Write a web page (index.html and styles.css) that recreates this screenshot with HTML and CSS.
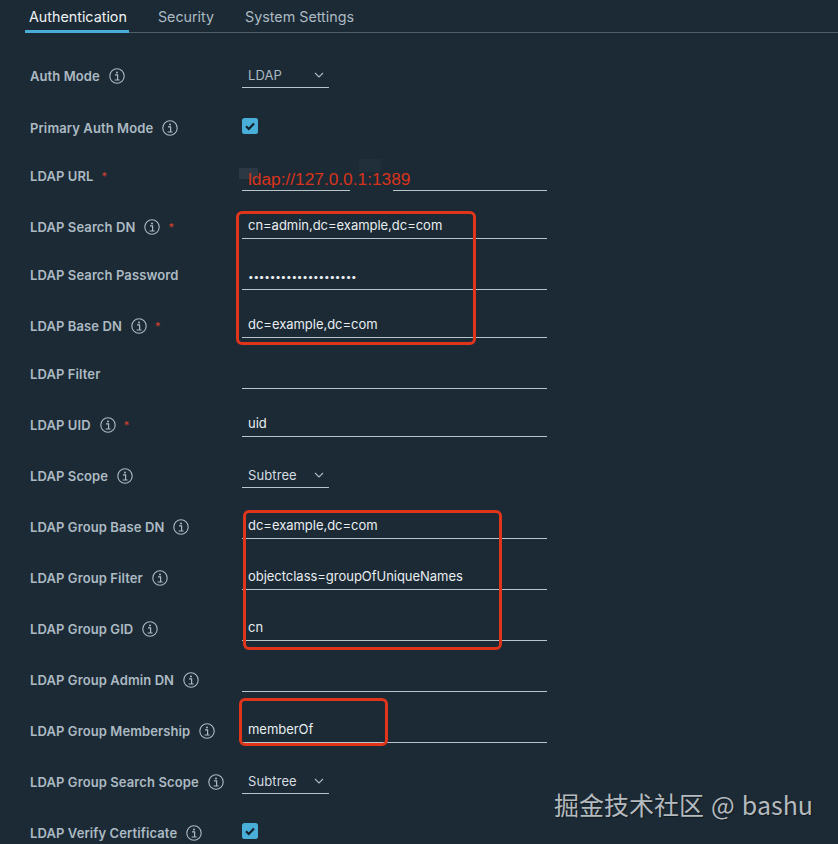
FILE: index.html
```html
<!DOCTYPE html>
<html lang="en">
<head>
    <meta charset="UTF-8">
    <title>Authentication</title>
    <link rel="stylesheet" href="styles.css">
</head>
<body>
    <svg class="defs" width="0" height="0">
        <symbol id="info" viewBox="0 0 16 16">
            <circle cx="8" cy="8" r="7.2" fill="none" stroke="currentColor" stroke-width="1.1"/>
            <circle cx="8" cy="4.4" r="1" fill="currentColor"/>
            <path d="M6 6.9h2.6v5M5.6 12h5" fill="none" stroke="currentColor" stroke-width="1.2"/>
        </symbol>
        <symbol id="caret" viewBox="0 0 10 6">
            <path d="M1 1l4 4 4-4" fill="none" stroke="currentColor" stroke-width="1.1"/>
        </symbol>
        <symbol id="check" viewBox="0 0 16 16">
            <rect width="16" height="16" rx="2.5" fill="#49afd9"/>
            <path d="M4 8.2l2.8 2.8L12 5.4" fill="none" stroke="#14222c" stroke-width="2.2"/>
        </symbol>
    </svg>

    <nav class="tabs">
        <a class="tab active">Authentication</a>
        <a class="tab">Security</a>
        <a class="tab">System Settings</a>
    </nav>

    <form class="form">
        <div class="row">
            <label>Auth Mode <svg class="info"><use href="#info"/></svg></label>
            <div class="select short"><span>LDAP</span><svg class="caret"><use href="#caret"/></svg></div>
        </div>
        <div class="row high">
            <label>Primary Auth Mode <svg class="info"><use href="#info"/></svg></label>
            <svg class="checkbox"><use href="#check"/></svg>
        </div>
        <div class="row">
            <label class="plain">LDAP URL <em>*</em></label>
            <div class="input url">
                <span class="smudge"></span>
                <span class="smudge faint"></span>
                <span class="line-gap"></span>
                <span class="url-text">ldap://127.0.0.1:1389</span>
            </div>
        </div>
        <div class="row low">
            <label>LDAP Search DN <svg class="info"><use href="#info"/></svg> <em>*</em></label>
            <div class="input">cn=admin,dc=example,dc=com</div>
        </div>
        <div class="row">
            <label class="plain">LDAP Search Password</label>
            <div class="input dots">••••••••••••••••••••</div>
        </div>
        <div class="row low">
            <label>LDAP Base DN <svg class="info"><use href="#info"/></svg> <em>*</em></label>
            <div class="input">dc=example,dc=com</div>
        </div>
        <div class="row">
            <label class="plain">LDAP Filter</label>
            <div class="input"></div>
        </div>
        <div class="row low">
            <label>LDAP UID <svg class="info"><use href="#info"/></svg> <em>*</em></label>
            <div class="input">uid</div>
        </div>
        <div class="row">
            <label>LDAP Scope <svg class="info"><use href="#info"/></svg></label>
            <div class="select"><span>Subtree</span><svg class="caret"><use href="#caret"/></svg></div>
        </div>
        <div class="row">
            <label>LDAP Group Base DN <svg class="info"><use href="#info"/></svg></label>
            <div class="input">dc=example,dc=com</div>
        </div>
        <div class="row">
            <label>LDAP Group Filter <svg class="info"><use href="#info"/></svg></label>
            <div class="input">objectclass=groupOfUniqueNames</div>
        </div>
        <div class="row">
            <label>LDAP Group GID <svg class="info"><use href="#info"/></svg></label>
            <div class="input">cn</div>
        </div>
        <div class="row">
            <label>LDAP Group Admin DN <svg class="info"><use href="#info"/></svg></label>
            <div class="input"></div>
        </div>
        <div class="row">
            <label>LDAP Group Membership <svg class="info"><use href="#info"/></svg></label>
            <div class="input">memberOf</div>
        </div>
        <div class="row">
            <label>LDAP Group Search Scope <svg class="info"><use href="#info"/></svg></label>
            <div class="select"><span>Subtree</span><svg class="caret"><use href="#caret"/></svg></div>
        </div>
        <div class="row">
            <label>LDAP Verify Certificate <svg class="info"><use href="#info"/></svg></label>
            <svg class="checkbox"><use href="#check"/></svg>
        </div>
    </form>

    <!-- annotations drawn on top of the screenshot -->
    <div class="mark mark-search"></div>
    <div class="mark mark-group"></div>
    <div class="mark mark-member"></div>
    <div class="watermark">掘金技术社区 @ bashu</div>
</body>
</html>
```

FILE: styles.css
```css
body {
    margin: 0;
    height: 844px;
    overflow: hidden;
    position: relative;
    background-color: #1c2a35;
    color: #e9eef1;
    font-family: Inter, "Liberation Sans", sans-serif;
    font-size: 13px;
}

.defs {
    position: absolute;
}

.tabs {
    display: flex;
    gap: 25px;
    height: 32px;
    margin-left: 25px;
    border-bottom: 1px solid #4f5e69;
}

.tab {
    height: 30px;
    padding: 0 2px 0 4px;
    line-height: 34px;
    font-size: 14.3px;
    color: #acbac3;
}

.tab.active {
    color: #eef2f4;
    border-bottom: 3px solid #49afd9;
}

.form {
    padding: 4px 0 0 30px;
}

.row {
    display: grid;
    grid-template-columns: 212px 305px;
    align-items: end;
    height: 51px;
}

.row.low {
    height: 48px;
}

.row.high {
    height: 52px;
}

label {
    display: flex;
    align-items: center;
    gap: 5px;
    padding-bottom: 4px;
    font-size: 13px;
    letter-spacing: 0.1px;
    font-weight: 600;
    color: #acbac3;
}

label.plain {
    padding-bottom: 7px;
}

label em {
    margin-left: 3px;
    font-size: 11px;
    font-weight: 400;
    font-style: normal;
    color: #d8412c;
}

.info {
    width: 16px;
    height: 16px;
    margin-left: 4px;
    color: #acbac3;
}

.input,
.select {
    height: 25px;
    padding-left: 6px;
    line-height: 25px;
    letter-spacing: -0.03px;
    border-bottom: 1px solid #b9c4cb;
}

.select {
    display: flex;
    align-items: center;
    justify-content: space-between;
    width: 87px;
    padding-right: 5px;
    box-sizing: border-box;
    line-height: 22px;
    letter-spacing: 0.1px;
    color: #d5dde2;
}

.select.short {
    color: #acbac3;
}

.caret {
    width: 10px;
    height: 6px;
    color: #acbac3;
}

.checkbox {
    width: 16px;
    height: 16px;
    margin-bottom: 6px;
}

.dots {
    letter-spacing: -0.2px;
    font-size: 10px;
}

.url {
    display: flex;
    align-items: flex-end;
    position: relative;
    height: 24px;
    line-height: 22px;
    font-family: "Liberation Sans", sans-serif;
    font-size: 17.3px;
    letter-spacing: 0;
    color: #d8341c;
}

.url-text {
    position: relative;
}

.smudge {
    position: absolute;
    left: -3px;
    top: 2px;
    width: 19px;
    height: 11px;
    background-color: #2c3944;
}

.smudge.faint {
    left: 117px;
    top: -7px;
    width: 22px;
    height: 13px;
    background-color: #212f3a;
}

.line-gap {
    position: absolute;
    left: 108px;
    bottom: -1px;
    width: 43px;
    height: 1px;
    background-color: #1c2a35;
}

.mark {
    position: absolute;
    box-sizing: border-box;
    border: 3px solid #e0341b;
    border-radius: 6px;
}

.mark-search {
    left: 236px;
    top: 211px;
    width: 240px;
    height: 134px;
}

.mark-group {
    left: 243px;
    top: 510px;
    width: 259px;
    height: 140px;
}

.mark-member {
    left: 239px;
    top: 698px;
    width: 149px;
    height: 48px;
}

.watermark {
    position: absolute;
    left: 554px;
    top: 786px;
    font-family: "Noto Sans CJK SC", sans-serif;
    font-size: 25px;
    word-spacing: 1.5px;
    color: #b4babe;
    text-shadow: 1px 1px 1px rgba(0, 0, 0, 0.4);
}
```
